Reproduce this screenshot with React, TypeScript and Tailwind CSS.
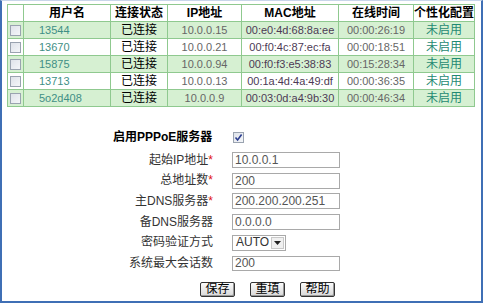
import React from "react";

interface Client {
  user: string;
  ip: string;
  mac: string;
  online: string;
}

const clients: Client[] = [
  { user: "13544", ip: "10.0.0.15", mac: "00:e0:4d:68:8a:ee", online: "00:00:26:19" },
  { user: "13670", ip: "10.0.0.21", mac: "00:f0:4c:87:ec:fa", online: "00:00:18:51" },
  { user: "15875", ip: "10.0.0.94", mac: "00:f0:f3:e5:38:83", online: "00:15:28:34" },
  { user: "13713", ip: "10.0.0.13", mac: "00:1a:4d:4a:49:df", online: "00:00:36:35" },
  { user: "5o2d408", ip: "10.0.0.9", mac: "00:03:0d:a4:9b:30", online: "00:00:46:34" },
];

// 表单字段
const fields = [
  { label: "起始IP地址", required: true, value: "10.0.0.1" },
  { label: "总地址数", required: true, value: "200" },
  { label: "主DNS服务器", required: true, value: "200.200.200.251" },
  { label: "备DNS服务器", required: false, value: "0.0.0.0" },
];

const cell = "border border-[#8fc98f] p-0 h-[17px]";

function CheckBox({ checked = false }: { checked?: boolean }) {
  return (
    <span className="inline-flex w-[11px] h-[11px] border border-[#9aa3b0] bg-gradient-to-br from-[#dfe3ea] to-[#f4f6f9] items-center justify-center align-middle">
      {checked && (
        <svg width="9" height="9" viewBox="0 0 9 9">
          <path d="M1.5 4.5 L3.6 7 L7.6 1.5" fill="none" stroke="#2b3d8f" strokeWidth={1.6} />
        </svg>
      )}
    </span>
  );
}

function FormRow({ label, required, children }: { label: string; required?: boolean; children: React.ReactNode }) {
  return (
    <div className="flex items-center h-[20.6px]">
      <div className="w-[112px] text-right pr-[1px] text-[#333] text-[12px]">
        {label}
        {required && <span className="text-[#e01010]">*</span>}
      </div>
      <div className="ml-[18px]">{children}</div>
    </div>
  );
}

function Btn({ children }: { children: React.ReactNode }) {
  return (
    <button className="w-[35px] h-[15px] rounded-[2px] border border-[#333] bg-gradient-to-b from-[#fbfbfb] to-[#d8d8d8] text-[12px] leading-[12px] text-black shadow-[inset_-1px_-1px_0_#999]">
      {children}
    </button>
  );
}

export default function App() {
  return (
    <div
      className="w-[483px] h-[303px] bg-white border-l-2 border-r-2 border-b-2 border-t border-l-[#3f6fb5] border-r-[#3f6fb5] border-b-[#3f6fb5] border-t-[#c9d6ea] overflow-hidden text-[11px] leading-[13px]"
      style={{ fontFamily: '"Liberation Sans", "Noto Sans CJK SC", sans-serif' }}
    >
      {/* 在线用户列表 */}
      <table className="ml-[5px] mt-[3px] border-collapse border border-[#8fc98f] table-fixed w-[467px]">
        <colgroup>
          <col className="w-[16px]" />
          <col className="w-[87px]" />
          <col className="w-[57px]" />
          <col className="w-[74px]" />
          <col className="w-[97px]" />
          <col className="w-[75px]" />
          <col className="w-[61px]" />
        </colgroup>
        <thead>
          <tr className="bg-white text-black text-[12px]">
            <th className={cell}></th>
            <th className={`${cell} font-bold`}>用户名</th>
            <th className={`${cell} font-bold`}>连接状态</th>
            <th className={`${cell} font-bold`}>IP地址</th>
            <th className={`${cell} font-bold`}>MAC地址</th>
            <th className={`${cell} font-bold`}>在线时间</th>
            <th className={`${cell} font-bold whitespace-nowrap`}>个性化配置</th>
          </tr>
        </thead>
        <tbody>
          {clients.map((c, i) => (
            <tr key={c.user} className={i % 2 === 0 ? "bg-[#d6f0d2]" : "bg-white"}>
              <td className={`${cell} text-center`}>
                <CheckBox />
              </td>
              <td className={`${cell} pl-[15px] text-[#3f8f86]`}>{c.user}</td>
              <td className={`${cell} text-center text-black text-[12px]`}>已连接</td>
              <td className={`${cell} text-center text-[#666]`}>{c.ip}</td>
              <td className={`${cell} text-center text-[#4d3a55] whitespace-nowrap`}>{c.mac}</td>
              <td className={`${cell} text-center text-[#666]`}>{c.online}</td>
              <td className={`${cell} text-center text-[#1f8a73] text-[12px]`}>未启用</td>
            </tr>
          ))}
        </tbody>
      </table>

      {/* PPPoE服务器设置 */}
      <div className="mt-[22px] ml-[111px]">
        <div className="flex items-center h-[16px]">
          <span className="w-[112px] font-bold text-black text-[12px]">启用PPPoE服务器</span>
          <span className="ml-[8px]">
            <CheckBox checked />
          </span>
        </div>
        <div className="mt-[5px] -ml-[11px]">
          {fields.map((f) => (
            <FormRow key={f.label} label={f.label} required={f.required}>
              <input
                readOnly
                value={f.value}
                className="block w-[108px] h-[16px] border border-[#a9a9a9] px-[2px] text-[12px] leading-[14px] text-[#555] outline-none"
              />
            </FormRow>
          ))}
          <FormRow label="密码验证方式">
            <div className="flex items-center w-[54px] h-[16px] border border-[#a9a9a9] pl-[3px] text-[12px] text-[#333]">
              <span className="flex-1">AUTO</span>
              <span className="w-[13px] h-[12px] mr-[1px] flex items-center justify-center bg-[#f0f0f0] border border-[#c8c8c8]">
                <svg width="7" height="4" viewBox="0 0 7 4">
                  <path d="M0 0 H7 L3.5 4 Z" fill="#222" />
                </svg>
              </span>
            </div>
          </FormRow>
          <FormRow label="系统最大会话数">
            <input
              readOnly
              value="200"
              className="block w-[108px] h-[15px] border border-[#a9a9a9] px-[2px] text-[12px] leading-[13px] text-[#555] outline-none"
            />
          </FormRow>
        </div>
        <div className="flex gap-[15px] ml-[87px] mt-[8px]">
          <Btn>保存</Btn>
          <Btn>重填</Btn>
          <Btn>帮助</Btn>
        </div>
      </div>
    </div>
  );
}
